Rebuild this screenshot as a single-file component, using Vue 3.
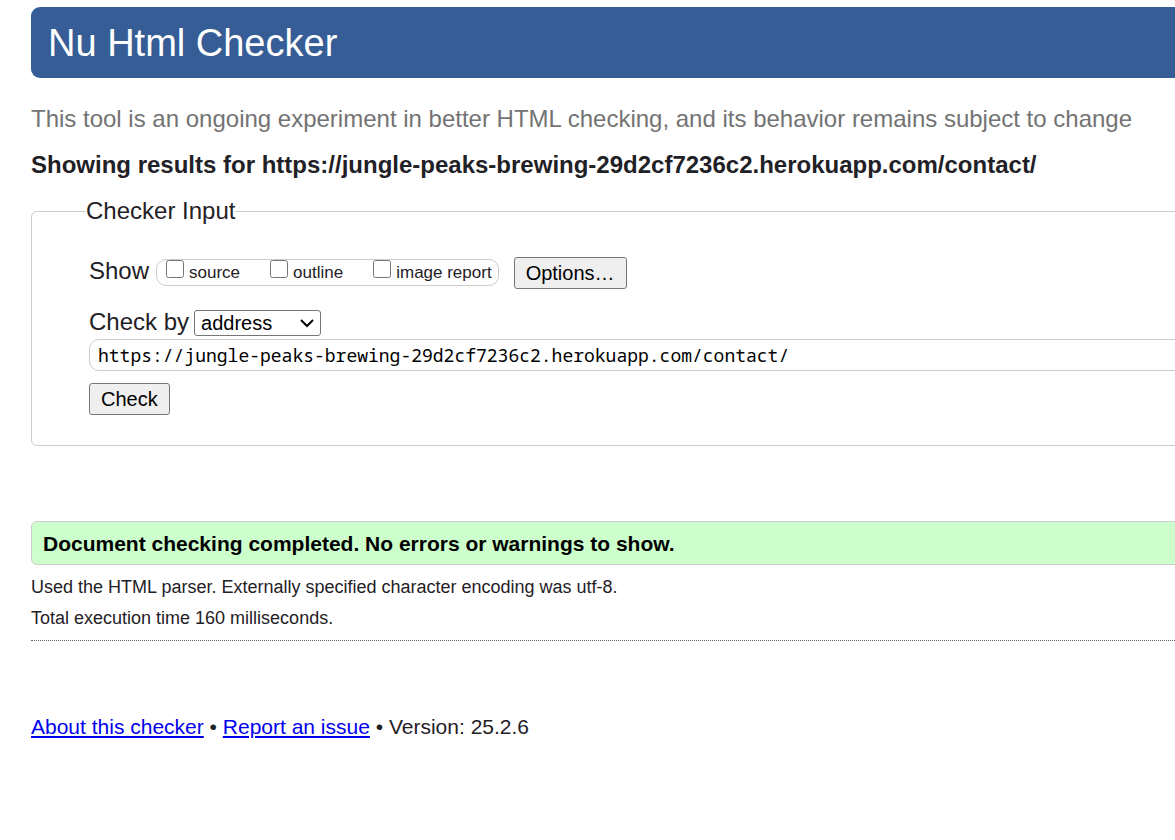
<script setup>
import { ref } from 'vue'

const show = ref([])
const mode = ref('address')
const address = ref('https://jungle-peaks-brewing-29d2cf7236c2.herokuapp.com/contact/')
const options = ['source', 'outline', 'image report']
</script>

<template>
  <div class="page">
    <header class="banner"><h1>Nu Html Checker</h1></header>
    <p class="note">This tool is an ongoing experiment in better HTML checking, and its behavior remains subject to change</p>
    <h2>Showing results for https://jungle-peaks-brewing-29d2cf7236c2.herokuapp.com/contact/</h2>
    <form @submit.prevent>
      <fieldset class="checker">
        <legend>Checker Input</legend>
        <div class="row show">
          <span>Show</span>
          <div class="choices">
            <label v-for="o in options" :key="o"><input v-model="show" type="checkbox" :value="o"><span>{{ o }}</span></label>
          </div>
          <button type="button">Options…</button>
        </div>
        <div class="row by">
          <label for="mode">Check by</label>
          <div class="picker">
            <select id="mode" v-model="mode">
              <option>address</option>
              <option>file upload</option>
              <option>text input</option>
            </select>
            <svg class="chevron" width="14" height="10" viewBox="0 0 14 10" aria-hidden="true">
              <path d="M1 2 L7 8 L13 2" fill="none" stroke="#000" stroke-width="2" />
            </svg>
          </div>
        </div>
        <input v-model="address" class="address" type="text" aria-label="Address" spellcheck="false">
        <button type="submit">Check</button>
      </fieldset>
    </form>
    <p class="success">Document checking completed. No errors or warnings to show.</p>
    <div class="details">
      <p>Used the HTML parser. Externally specified character encoding was utf-8.</p>
      <p>Total execution time 160 milliseconds.</p>
    </div>
    <footer><a href="#about">About this checker</a> • <a href="#issue">Report an issue</a> • Version: 25.2.6</footer>
  </div>
</template>

<style>
body { background: #fff; overflow-x: hidden; }
</style>

<style scoped>
.page {
  margin-right: -16px;
  padding: 7px 0 0 31px;
  color: #1f2126;
  font-family: "Liberation Sans", Arial, sans-serif;
}
h1, h2, p { margin: 0; font-size: inherit; font-weight: inherit; }
.banner { padding: 15px 17px 13px; border-radius: 9px; background: #365d95; color: #fff; }
h1 { font-size: 38px; line-height: 43px; }
.note { margin-top: 27px; color: #737373; font-size: 24px; line-height: 28px; }
h2 { margin-top: 18px; font-size: 24px; font-weight: bold; line-height: 28px; }
.checker {
  min-width: 0;
  margin: 18px 0 0;
  padding: 32px 0 30px 57px;
  border: 1px solid #ccc;
  border-radius: 6px;
}
legend { margin-left: -3px; padding: 0; font-size: 24px; line-height: 28px; }
.row { display: flex; align-items: center; font-size: 24px; line-height: 28px; }
.show { align-items: flex-start; }
.choices {
  display: flex;
  gap: 30px;
  box-sizing: border-box;
  height: 27px;
  margin: 2px 15px 0 7px;
  padding: 0 6px 0 9px;
  border: 1px solid #ccc;
  border-radius: 10px;
}
.choices label { display: flex; font-size: 17px; line-height: 26px; }
.choices input { width: 18px; height: 18px; margin: 0 5px 0 0; }
button {
  height: 32px;
  padding: 0 11px;
  border: 1px solid #767676;
  border-radius: 3px;
  background: #efefef;
  color: #000;
  font: 20px/28px "Liberation Sans", Arial, sans-serif;
}
.by { align-items: flex-start; margin-top: 19px; }
.picker { position: relative; display: flex; width: 127px; margin: 2px 0 0 5px; }
select {
  appearance: none;
  box-sizing: border-box;
  width: 100%;
  height: 26px;
  padding: 0 24px 0 6px;
  border: 1px solid #767676;
  border-radius: 3px;
  background: #fff;
  color: #000;
  font: 20px "Liberation Sans", Arial, sans-serif;
}
.chevron { position: absolute; top: 8px; right: 7px; pointer-events: none; }
.address {
  display: block;
  box-sizing: border-box;
  width: 100%;
  height: 32px;
  margin: 3px 0 12px;
  padding: 0 8px;
  border: 1px solid #ccc;
  border-radius: 10px;
  color: #000;
  font: 18px Consolas, "Noto Sans Mono", "DejaVu Sans Mono", monospace;
}
.success {
  margin-top: 75px;
  padding: 9px 11px 7px;
  border: 1px solid #ccc;
  border-radius: 6px;
  background: #cfc;
  color: #000;
  font-size: 21px;
  font-weight: bold;
  line-height: 26px;
}
.details { padding: 7px 0 6px; border-bottom: 1px dotted #666; font-size: 18px; line-height: 31px; }
footer { margin-top: 74px; font-size: 21px; line-height: 24px; }
a { color: #00e; }
</style>
